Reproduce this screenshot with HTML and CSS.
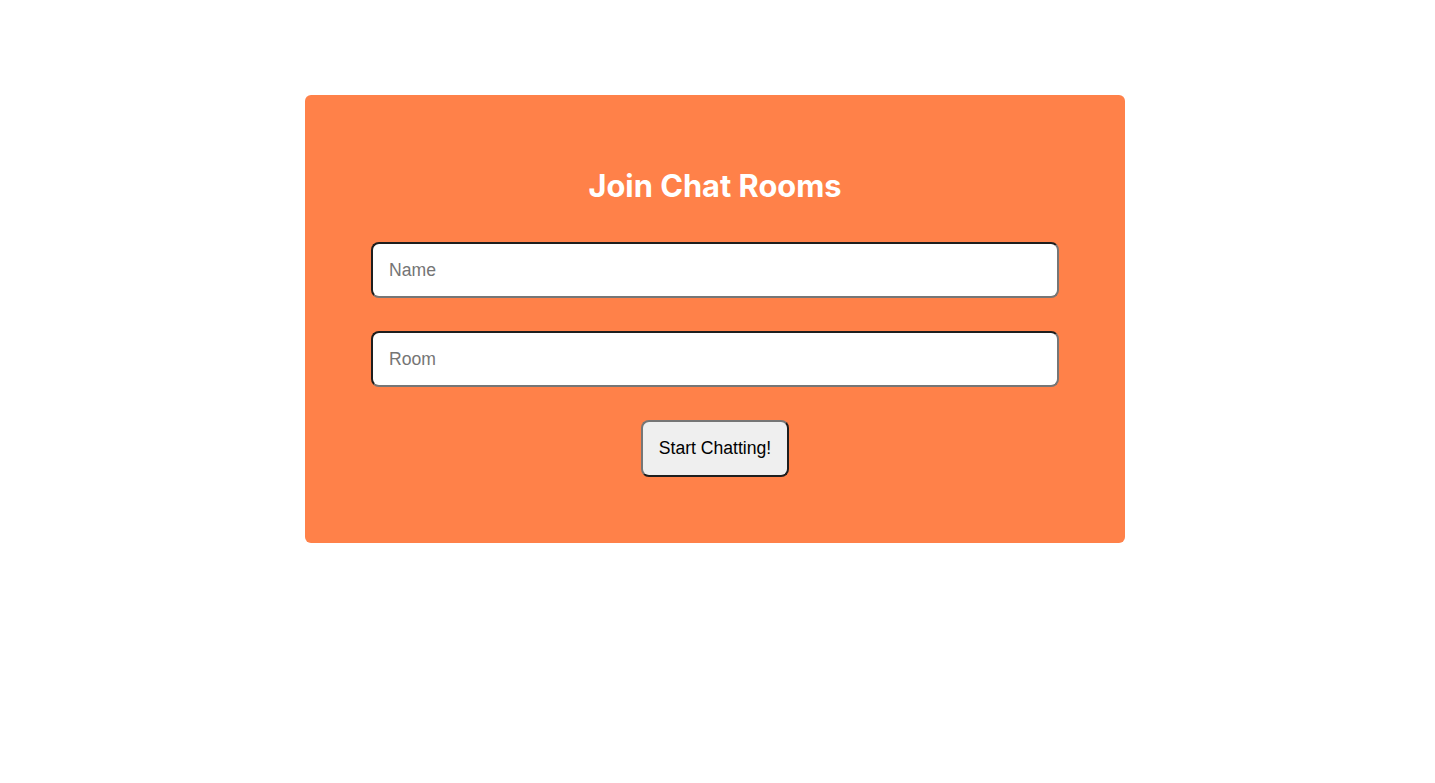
FILE: index.html
```html
<!DOCTYPE html>
<html lang="en">
<head>
<meta charset="utf-8">
<title>Join Chat Rooms</title>
<link rel="stylesheet" href="styles.css">
</head>
<body>
<main class="page">
  <form class="card">
    <h1 class="title">Join Chat Rooms</h1>
    <input class="field" type="text" placeholder="Name">
    <input class="field" type="text" placeholder="Room">
    <button class="btn" type="button">Start Chatting!</button>
  </form>
</main>
</body>
</html>
```
FILE: styles.css
```css
* { box-sizing: border-box; }
html, body { margin: 0; padding: 0; background: #fff; }
body { font-family: "Liberation Sans", Arial, sans-serif; }
.page { padding-top: 95px; padding-left: 305px; }
.card {
  width: 820px;
  height: 448px;
  background: #ff8149;
  border-radius: 6px;
  padding: 72px 66px 0 66px;
  display: flex;
  flex-direction: column;
  align-items: center;
}
.title {
  margin: 0 0 37px;
  font-family: Inter, "Noto Sans", sans-serif;
  font-weight: 700;
  font-size: 30.8px;
  line-height: 38px;
  color: #fff;
  text-align: center;
}
.field {
  width: 100%;
  height: 56px;
  margin: 0 0 33px;
  padding: 0 16px;
  border: 2px solid;
  border-color: #1e1e1e #767676 #767676 #1e1e1e;
  border-radius: 8px;
  background: #fff;
  font-family: "Liberation Sans", Arial, sans-serif;
  font-size: 17.6px;
  color: #000;
  outline: none;
}
.field::placeholder { color: #757575; }
.btn {
  width: 148px;
  height: 57px;
  padding: 0;
  border: 2px solid;
  border-color: #767676 #1e1e1e #1e1e1e #767676;
  border-radius: 8px;
  background: #efefef;
  font-family: "Liberation Sans", Arial, sans-serif;
  font-size: 17.6px;
  color: #000;
}
```
